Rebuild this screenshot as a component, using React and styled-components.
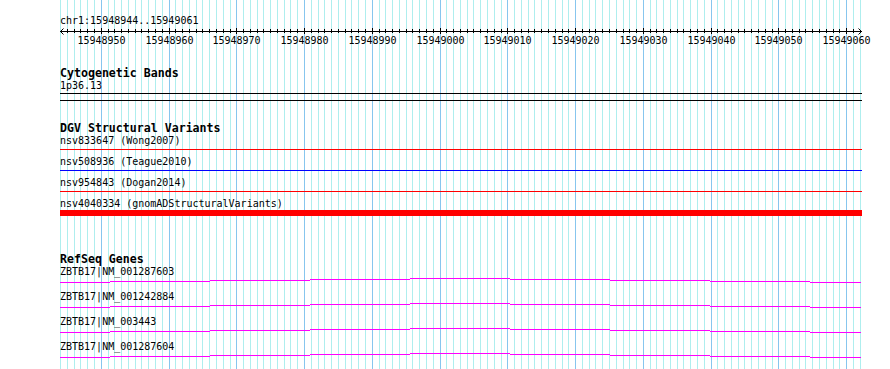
import React from "react";
import styled, { createGlobalStyle } from "styled-components";

const GlobalStyle = createGlobalStyle`
  body {
    margin: 0;
    background: #ffffff;
  }
`;

const START = 15948944;
const END = 15949061;
const LEFT = 60.6;
const STEP = 6.776;
const baseX = (i) => Math.floor(LEFT + STEP * i);

const tracks = {
  variants: [
    { label: "nsv833647 (Wong2007)", color: "#ff0000", thick: 1, offset: 2 },
    { label: "nsv508936 (Teague2010)", color: "#0000ff", thick: 1, offset: 2 },
    { label: "nsv954843 (Dogan2014)", color: "#ff0000", thick: 1, offset: 2 },
    { label: "nsv4040334 (gnomADStructuralVariants)", color: "#ff0000", thick: 6, offset: 0 },
  ],
  genes: [
    "ZBTB17|NM_001287603",
    "ZBTB17|NM_001242884",
    "ZBTB17|NM_003443",
    "ZBTB17|NM_001287604",
  ],
};

const Browser = styled.div`
  position: relative;
  width: 890px;
  height: 369px;
  overflow: hidden;
  background: #ffffff;
  color: #000000;
  font-family: "DejaVu Sans Mono", "Liberation Mono", monospace;
`;

const GridLayer = styled.svg`
  position: absolute;
  left: 0;
  top: 0;
  z-index: 0;
`;

const Tracks = styled.div`
  position: relative;
  z-index: 1;
  display: flex;
  flex-direction: column;
  width: 802px;
  padding: 15px 0 0 60px;
`;

const Location = styled.div`
  font-size: 10px;
  line-height: 12px;
  height: 12px;
  white-space: nowrap;
`;

const RulerSvg = styled.svg`
  display: block;
  overflow: visible;
  font-family: "DejaVu Sans Mono", "Liberation Mono", monospace;
  font-size: 10px;
`;

const Track = styled.section`
  display: flex;
  flex-direction: column;
  margin-top: ${({ $gap }) => $gap}px;
`;

const TrackTitle = styled.div`
  font-size: 11.6px;
  font-weight: bold;
  line-height: 13px;
  height: 13px;
  white-space: nowrap;
`;

const FeatureLabel = styled.div`
  font-size: 10px;
  line-height: 12px;
  height: 12px;
  white-space: nowrap;
`;

const Band = styled.div`
  margin-top: 1px;
  width: 802px;
  height: 6px;
  border-top: 1px solid #000000;
  border-bottom: 1px solid #000000;
`;

const VariantSlot = styled.div`
  height: 6px;
  margin-bottom: 3px;
  padding-top: ${({ $offset }) => $offset}px;
  box-sizing: border-box;
`;

const VariantLine = styled.div`
  width: 802px;
  height: ${({ $thick }) => $thick}px;
  background: ${({ $color }) => $color};
`;

const GeneSvg = styled.svg`
  display: block;
`;

const Grid = () => {
  const lines = [];
  for (let i = 0; i <= END - START + 1; i++) {
    const major = (START + i) % 10 === 0;
    lines.push(
      <rect
        key={i}
        x={baseX(i)}
        y={0}
        width={1}
        height={369}
        fill={major ? "#87c6ee" : "#aeeeee"}
      />
    );
  }
  return (
    <GridLayer width="890" height="369" shapeRendering="crispEdges">
      {lines}
    </GridLayer>
  );
};

const Ruler = () => {
  const ticks = [];
  const labels = [];
  for (let i = 1; i <= END - START; i++) {
    const x = baseX(i) - 60 + 0.5;
    const major = (START + i) % 10 === 0;
    ticks.push(
      <line key={i} x1={x} x2={x} y1={major ? 1 : 2} y2={major ? 7 : 6} />
    );
    if (major) {
      labels.push(
        <text key={i} x={x} y={17.3} textAnchor="middle" fill="#000">
          {START + i}
        </text>
      );
    }
  }
  return (
    <RulerSvg width="802" height="20">
      <g stroke="#000" strokeWidth="1" shapeRendering="crispEdges">
        <line x1={0} x2={802} y1={4.5} y2={4.5} />
        {ticks}
      </g>
      <g stroke="#000" strokeWidth="1" fill="none">
        <polyline points="3.5,1.5 0.5,4.5 3.5,7.5" />
        <polyline points="798.5,1.5 801.5,4.5 798.5,7.5" />
      </g>
      {labels}
    </RulerSvg>
  );
};

const steps = [
  [0, 50, 4],
  [50, 150, 3],
  [150, 250, 2],
  [250, 350, 1],
  [350, 450, 0],
  [450, 550, 1],
  [550, 650, 2],
  [650, 750, 3],
  [750, 801, 4],
];

const GeneModel = () => (
  <GeneSvg width="802" height="13" shapeRendering="crispEdges">
    {steps.map(([a, b, y]) => (
      <rect key={a} x={a} y={y} width={b - a} height={1} fill="#ff00ff" />
    ))}
  </GeneSvg>
);

export default function App() {
  return (
    <>
      <GlobalStyle />
      <Browser>
        <Grid />
        <Tracks>
          <Location>chr1:15948944..15949061</Location>
          <Ruler />

          <Track $gap={20}>
            <TrackTitle>Cytogenetic Bands</TrackTitle>
            <FeatureLabel>1p36.13</FeatureLabel>
            <Band />
          </Track>

          <Track $gap={21}>
            <TrackTitle>DGV Structural Variants</TrackTitle>
            {tracks.variants.map((v) => (
              <React.Fragment key={v.label}>
                <FeatureLabel>{v.label}</FeatureLabel>
                <VariantSlot $offset={v.offset}>
                  <VariantLine $thick={v.thick} $color={v.color} />
                </VariantSlot>
              </React.Fragment>
            ))}
          </Track>

          <Track $gap={34}>
            <TrackTitle>RefSeq Genes</TrackTitle>
            {tracks.genes.map((g) => (
              <React.Fragment key={g}>
                <FeatureLabel>{g}</FeatureLabel>
                <GeneModel />
              </React.Fragment>
            ))}
          </Track>
        </Tracks>
      </Browser>
    </>
  );
}
